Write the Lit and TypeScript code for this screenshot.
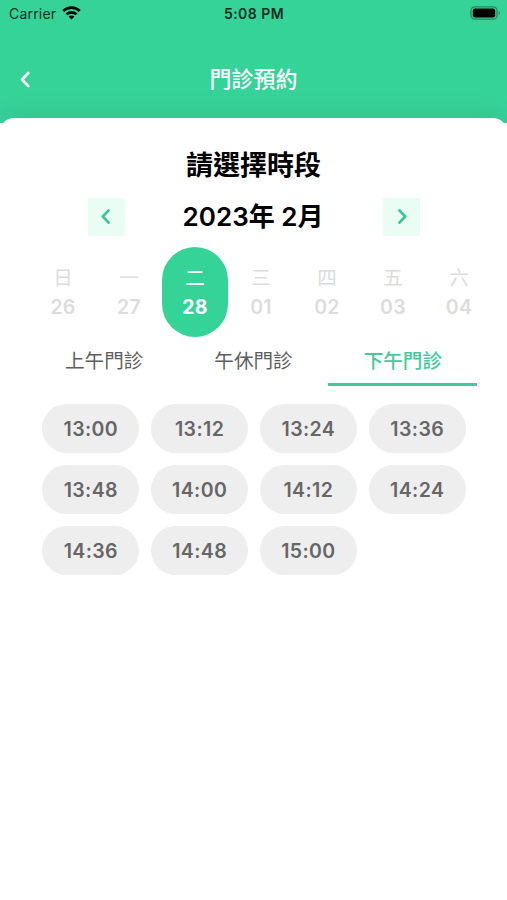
import { LitElement, html, css, svg } from "lit";
import { customElement, property, state } from "lit/decorators.js";
import { classMap } from "lit/directives/class-map.js";

const chevron = (dir: "left" | "right") =>
  dir === "left" ? svg`<path d="M8.6 2.4 L2.8 8.5 L8.6 14.6" />` : svg`<path d="M3.4 2.4 L9.2 8.5 L3.4 14.6" />`;

@customElement("status-bar")
class StatusBar extends LitElement {
  static styles = css`
    :host {
      display: grid;
      grid-template-columns: 1fr auto 1fr;
      align-items: center;
      height: 28px;
      padding: 0 6px 0 9px;
      font-size: 14px;
      line-height: 28px;
      color: #0b2e20;
    }
    .carrier { display: flex; align-items: center; gap: 6px; letter-spacing: 0.2px; }
    .wifi { width: 19px; height: 14px; margin-top: -2px; }
    .time { font-weight: 600; letter-spacing: 0.45px; margin-right: 2px; }
    .battery { justify-self: end; width: 31px; height: 14px; margin-top: -2px; }
  `;
  render() {
    return html`
      <div class="carrier">
        <span>Carrier</span>
        <svg class="wifi" viewBox="0 0 19 14" fill="none" stroke="#000" stroke-width="2.7">
          <path d="M1.2 5 C5.8 .4 13.2 .4 17.8 5" />
          <path d="M4.5 8.4 C7.3 5.7 11.7 5.7 14.5 8.4" />
          <path d="M9.5 13.6 L6.6 10.6 C8.2 9.1 10.8 9.1 12.4 10.6 Z" fill="#000" stroke="none" />
        </svg>
      </div>
      <div class="time">5:08 PM</div>
      <svg class="battery" viewBox="0 0 31 14">
        <rect x="1" y="0.8" width="26" height="12.4" rx="3.8" fill="none" stroke="#24895f" stroke-width="1.3" />
        <rect x="2.8" y="2.6" width="22.4" height="8.8" rx="2" fill="#000" />
        <path d="M28.6 5 C30.4 5.7 30.4 8.3 28.6 9 Z" fill="#24895f" />
      </svg>
    `;
  }
}

@customElement("day-cell")
class DayCell extends LitElement {
  @property() weekday = "";
  @property() date = "";
  @property({ type: Boolean, reflect: true }) selected = false;
  static styles = css`
    :host {
      display: flex;
      flex-direction: column;
      align-items: center;
      box-sizing: border-box;
      width: 66px;
      height: 90px;
      padding-top: 16px;
      border-radius: 33px;
      color: #dcdcdc;
      font-size: 19.5px;
      line-height: 30px;
    }
    :host([selected]) { background: #36d399; color: #fff; }
    .weekday { font-weight: 400; }
    .date { font-weight: 600; letter-spacing: 0.3px; line-height: 29px; }
    :host([selected]) .weekday { font-weight: 500; }
    :host([selected]) .date { font-weight: 700; }
  `;
  render() {
    return html`<span class="weekday">${this.weekday}</span><span class="date">${this.date}</span>`;
  }
}

@customElement("app-root")
class AppRoot extends LitElement {
  @state() private day = "28";
  @state() private period = "下午門診";

  private days = [["日", "26"], ["一", "27"], ["二", "28"], ["三", "01"], ["四", "02"], ["五", "03"], ["六", "04"]];
  private periods = ["上午門診", "午休門診", "下午門診"];
  private slots = ["13:00", "13:12", "13:24", "13:36", "13:48", "14:00", "14:12", "14:24", "14:36", "14:48", "15:00"];

  static styles = css`
    :host {
      display: block;
      height: 900px;
      overflow: hidden;
      background: #fff;
      font-family: Inter, "Noto Sans CJK TC", sans-serif;
    }
    button { border: 0; padding: 0; margin: 0; font: inherit; background: none; }
    .header { height: 123px; overflow: hidden; background: #36d399; }
    .nav {
      display: grid;
      grid-template-columns: 50px 1fr 50px;
      align-items: center;
      height: 100px;
      padding-top: 2px;
      box-sizing: border-box;
    }
    .back { display: flex; margin-left: 19px; }
    .back svg { width: 13px; height: 21px; stroke: #fff; stroke-width: 2.4; }
    svg { fill: none; stroke-linecap: round; stroke-linejoin: round; }
    .heading { text-align: center; color: #fff; font-size: 22px; line-height: 32px; font-weight: 500; }
    .sheet {
      height: 782px;
      margin-top: -5px;
      padding-top: 28px;
      box-sizing: border-box;
      border-radius: 14px 14px 0 0;
      background: #fff;
      box-shadow: 0 0 28px rgba(0, 0, 0, 0.1);
    }
    .title { text-align: center; font-size: 27px; line-height: 40px; font-weight: 600; }
    .month { display: flex; justify-content: space-between; align-items: center; width: 332px; margin: 11px auto 0; height: 40px; }
    .step { display: flex; align-items: center; justify-content: center; width: 37px; height: 38px; background: #e9fdf5; }
    .step svg { width: 12px; height: 17px; margin: -1px 0 0 -1px; stroke: #3cc894; stroke-width: 2.8; }
    .step:last-child svg { margin-left: 1px; }
    .label { font-size: 26px; line-height: 38px; font-weight: 600; margin-right: 1px; }
    .week { display: flex; margin: 10px 0 0 30px; }
    .tabs { display: grid; grid-template-columns: repeat(3, 1fr); margin: 0 29.5px 0 29.5px; }
    .tab { height: 49px; box-sizing: border-box; border-bottom: 3px solid transparent; font-size: 19.6px; line-height: 44px; padding-top: 2px; color: #5e5e5e; }
    .tab.active { border-color: #46c99a; color: #42cb99; font-weight: 500; }
    .slots { display: grid; grid-template-columns: repeat(4, 97px); gap: 12px 11.8px; margin: 18px 0 0 42.3px; }
    .slot { height: 49px; border-radius: 24.5px; background: #eee; color: #666; font-size: 19.5px; font-weight: 600; letter-spacing: 0.4px; }
  `;

  render() {
    return html`
      <div class="header">
        <status-bar></status-bar>
        <div class="nav">
          <button class="back"><svg viewBox="0 0 12 17">${chevron("left")}</svg></button>
          <div class="heading">門診預約</div>
        </div>
      </div>
      <div class="sheet">
        <div class="title">請選擇時段</div>
        <div class="month">
          <button class="step"><svg viewBox="0 0 12 17">${chevron("left")}</svg></button>
          <div class="label">2023年 2月</div>
          <button class="step"><svg viewBox="0 0 12 17">${chevron("right")}</svg></button>
        </div>
        <div class="week">
          ${this.days.map(([w, d]) => html`<day-cell .weekday=${w} .date=${d} ?selected=${d === this.day} @click=${() => (this.day = d)}></day-cell>`)}
        </div>
        <div class="tabs">
          ${this.periods.map((p) => html`<button class=${classMap({ tab: true, active: p === this.period })} @click=${() => (this.period = p)}>${p}</button>`)}
        </div>
        <div class="slots">${this.slots.map((s) => html`<button class="slot">${s}</button>`)}</div>
      </div>
    `;
  }
}
